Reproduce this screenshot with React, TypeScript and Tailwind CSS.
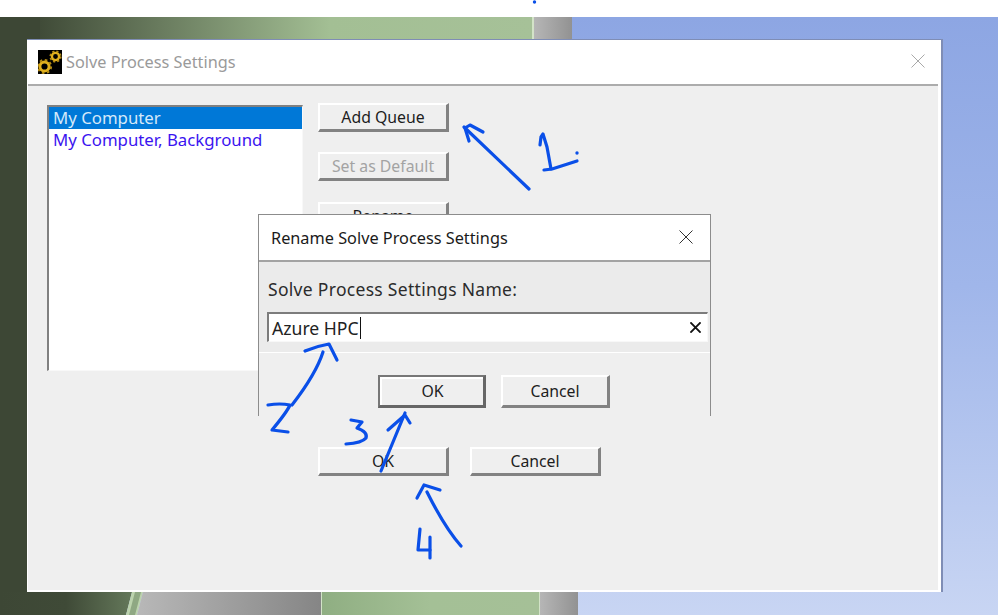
import type { ReactNode } from 'react'

const font = 'font-["Noto_Sans","Open_Sans",sans-serif]'

// classic raised win32 button
function WinButton({ className, children }: { className: string; children?: ReactNode }) {
  return (
    <div
      className={`flex items-center justify-center border-t-2 border-l-2 border-t-white border-l-white border-r-[3px] border-b-[3px] border-r-[#828282] border-b-[#828282] bg-[#efefef] pt-[2px] text-[15.800px] leading-none ${className}`}
    >
      {children}
    </div>
  )
}

// focused button has a dark frame round the raised face
function DefaultButton({ className, children }: { className: string; children?: ReactNode }) {
  return (
    <div className={`flex border-t-2 border-l-2 border-t-[#777777] border-l-[#777777] border-r-[3px] border-b-[3px] border-r-[#666666] border-b-[#666666] ${className}`}>
      <div className="flex flex-1 items-center justify-center border-t-2 border-l-2 border-t-white border-l-white bg-[#efefef] text-[15.800px] leading-none text-[#1d1d1d]">
        {children}
      </div>
    </div>
  )
}

function Wallpaper() {
  return (
    <svg className="absolute inset-0" width="998" height="615" viewBox="0 0 998 615">
      <defs>
        <linearGradient id="topGreen" x1="0" x2="1" y1="0" y2="0">
          <stop offset="0" stopColor="#3d4735" />
          <stop offset="0.07" stopColor="#3f4a37" />
          <stop offset="0.62" stopColor="#a3bf94" />
          <stop offset="1" stopColor="#a6c198" />
        </linearGradient>
        <linearGradient id="grayTop" x1="0" x2="1" y1="0" y2="0">
          <stop offset="0" stopColor="#b6b6b6" />
          <stop offset="1" stopColor="#929292" />
        </linearGradient>
        <linearGradient id="grayMid" x1="0" x2="1" y1="0" y2="0">
          <stop offset="0" stopColor="#b8b8b8" />
          <stop offset="1" stopColor="#858585" />
        </linearGradient>
        <linearGradient id="botDark" x1="0" x2="1" y1="0" y2="0">
          <stop offset="0" stopColor="#3d4735" />
          <stop offset="0.5" stopColor="#3f4a37" />
          <stop offset="1" stopColor="#64785a" />
        </linearGradient>
        <linearGradient id="botGreen" x1="0" x2="1" y1="0" y2="0">
          <stop offset="0" stopColor="#8fae82" />
          <stop offset="0.5" stopColor="#a4c096" />
          <stop offset="1" stopColor="#a5c097" />
        </linearGradient>
        <linearGradient id="blue" x1="0" x2="0" y1="0" y2="1">
          <stop offset="0" stopColor="#8da6e3" />
          <stop offset="0.45" stopColor="#a0b6ea" />
          <stop offset="1" stopColor="#c8d5f3" />
        </linearGradient>
      </defs>
      <rect x="0" y="17" width="998" height="598" fill="url(#blue)" />
      <rect x="0" y="17" width="532" height="22" fill="url(#topGreen)" />
      <rect x="532" y="17" width="2" height="22" fill="#d3e3c8" />
      <rect x="534" y="17" width="38" height="22" fill="url(#grayTop)" />
      <rect x="0" y="17" width="40" height="598" fill="#3d4735" />
      <polygon points="0,592 132,592 126,615 0,615" fill="url(#botDark)" />
      <polygon points="132,592 143,592 137,615 126,615" fill="#bcd3ad" />
      <polygon points="135,592 141,592 135,615 129,615" fill="#8fa883" />
      <polygon points="143,592 321,592 322,615 137,615" fill="url(#grayMid)" />
      <rect x="321" y="592" width="218" height="23" fill="url(#botGreen)" />
      <rect x="321" y="592" width="1" height="23" fill="#d3e3c8" />
      <rect x="539" y="592" width="1" height="23" fill="#d3e3c8" />
      <rect x="540" y="592" width="38" height="23" fill="url(#grayTop)" />
    </svg>
  )
}

function GearIcon() {
  return (
    <svg width="24" height="24" viewBox="0 0 24 24" className="shrink-0">
      <rect width="24" height="24" fill="#000" />
      <circle cx="6.500" cy="16.500" r="4.600" fill="none" stroke="#e0b01e" strokeWidth="3" />
      <circle cx="6.500" cy="16.500" r="6.600" fill="none" stroke="#b58c14" strokeWidth="2" strokeDasharray="2.600 2.600" />
      <circle cx="17.500" cy="6.500" r="3.600" fill="none" stroke="#e0b01e" strokeWidth="2.400" />
      <circle cx="17.500" cy="6.500" r="5.300" fill="none" stroke="#b58c14" strokeWidth="1.600" strokeDasharray="2.200 2" />
    </svg>
  )
}

function CloseIcon({ size, color, weight = 1 }: { size: number; color: string; weight?: number }) {
  return (
    <svg width={size} height={size} viewBox="0 0 14 14" className="shrink-0">
      <path d="M0.5 0.5 L13.5 13.5 M13.5 0.5 L0.5 13.5" stroke={color} strokeWidth={weight} fill="none" />
    </svg>
  )
}

// pen annotations drawn on top of the screenshot
function Ink() {
  const strokes = [
    'M529 189 L464 127',
    'M469 141 L465 128 L470 125 L483 132',
    'M540 145 L541 137 L543 134 L547 147 L551 169',
    'M544 170 L552 169 L577 161',
    'M323 352 Q316 374 292 405',
    'M305 351 Q317 346 329 344 L337 360',
    'M268 405 Q280 403 290 405 Q287 412 272 430 L288 432',
    'M351 420 L362 422 L357 428 Q368 432 366 438 Q362 443 346 444',
    'M381 471 L405 413',
    'M388 430 L405 415 L410 423',
    'M461 546 Q445 528 427 492',
    'M417 498 L424 485 L440 490',
    'M420 529 L418 550 L430 550',
    'M430 537 L430 558',
  ]
  return (
    <svg className="absolute inset-0 pointer-events-none" width="998" height="615" viewBox="0 0 998 615">
      {strokes.map((d, i) => (
        <path key={i} d={d} fill="none" stroke="#0a4fe8" strokeWidth="3.200" strokeLinecap="round" strokeLinejoin="round" />
      ))}
      <circle cx="577" cy="153" r="1.700" fill="#0a4fe8" />
      <circle cx="534.500" cy="2" r="1.700" fill="#0a4fe8" />
    </svg>
  )
}

function MainDialog() {
  return (
    <div className="absolute left-[27px] top-[39px] flex h-[553px] w-[916px] flex-col border-r-2 border-t border-[#7f8db5] bg-white">
      <div className="flex h-[44px] shrink-0 items-center pl-[11px] pr-[16px]">
        <GearIcon />
        <span className="ml-[4px] flex-1 text-[16.300px] text-[#9a9a9a]">Solve Process Settings</span>
        <div className="mb-[2px]">
          <CloseIcon size={14} color="#a9a9a9" />
        </div>
      </div>
      <div className="mb-[2px] ml-[1px] mr-[3px] flex-1 border-t-2 border-[#acacac] bg-[#efefef] pl-[19px] pt-[19px]">
        <div className="flex gap-[15px]">
          <div className="h-[266px] w-[256px] border-b border-l-2 border-r border-t-2 border-b-[#f8f8f8] border-l-[#808080] border-r-[#f8f8f8] border-t-[#808080] bg-white text-[16.800px] leading-[22px]">
            <div className="h-[22px] bg-[#0078d7] pl-[4px] text-[#d5e9fa]">My Computer</div>
            <div className="pl-[4px] text-[#3b14f0]">My Computer, Background</div>
          </div>
          <div className="-mt-[2px] flex flex-col gap-[20px]">
            <WinButton className="h-[29px] w-[131px] text-[#1d1d1d]">Add Queue</WinButton>
            <WinButton className="h-[29px] w-[131px] text-[#a3a3a3]">Set as Default</WinButton>
            <WinButton className="mt-px h-[29px] w-[131px] text-[#1d1d1d]">Rename</WinButton>
          </div>
        </div>
        <div className="ml-[271px] mt-[76px] flex gap-[21px]">
          <WinButton className="h-[29px] w-[131px] text-[#1d1d1d]">OK</WinButton>
          <WinButton className="h-[29px] w-[131px] text-[#1d1d1d]">Cancel</WinButton>
        </div>
      </div>
    </div>
  )
}

function RenameDialog() {
  return (
    <div className="absolute left-[258px] top-[214px] flex h-[202px] w-[453px] flex-col border-l border-r border-t border-[#8c8c8c] bg-[#efefef]">
      <div className="flex h-[45px] shrink-0 items-center justify-between bg-white pl-[12px] pr-[17px]">
        <span className="mt-[1px] text-[16.300px] text-[#1a1a1a]">Rename Solve Process Settings</span>
        <div className="mb-[2px]">
          <CloseIcon size={14} color="#333" />
        </div>
      </div>
      <div className="h-[93px] shrink-0 border-b border-t-2 border-b-white border-t-[#a3a3a3] bg-[#ebebeb] pl-[8px] pr-[2px]">
        <div className="pl-px pt-[15px] text-[17.500px] leading-[24px] tracking-[0.3px] text-[#2c2c2c]">Solve Process Settings Name:</div>
        <div className="mt-[11px] flex h-[30px] items-center justify-between border-b border-l-2 border-r border-t-2 border-b-[#f8f8f8] border-l-[#7c7c7c] border-r-[#f8f8f8] border-t-[#7c7c7c] bg-white pl-[3px] pr-[6px]">
          <span className="mt-px border-r border-[#111] pr-px text-[17.600px] leading-[22px] text-[#222]">Azure HPC</span>
          <CloseIcon size={11} color="#111" weight={2.400} />
        </div>
      </div>
      <div className="ml-[119px] mt-[22px] flex gap-[15px]">
        <DefaultButton className="h-[33px] w-[108px]">OK</DefaultButton>
        <WinButton className="h-[33px] w-[109px] text-[#1d1d1d]">Cancel</WinButton>
      </div>
    </div>
  )
}

export default function App() {
  return (
    <div className={`relative h-[615px] w-[998px] overflow-hidden bg-white ${font}`}>
      <Wallpaper />
      <MainDialog />
      <RenameDialog />
      <Ink />
    </div>
  )
}
